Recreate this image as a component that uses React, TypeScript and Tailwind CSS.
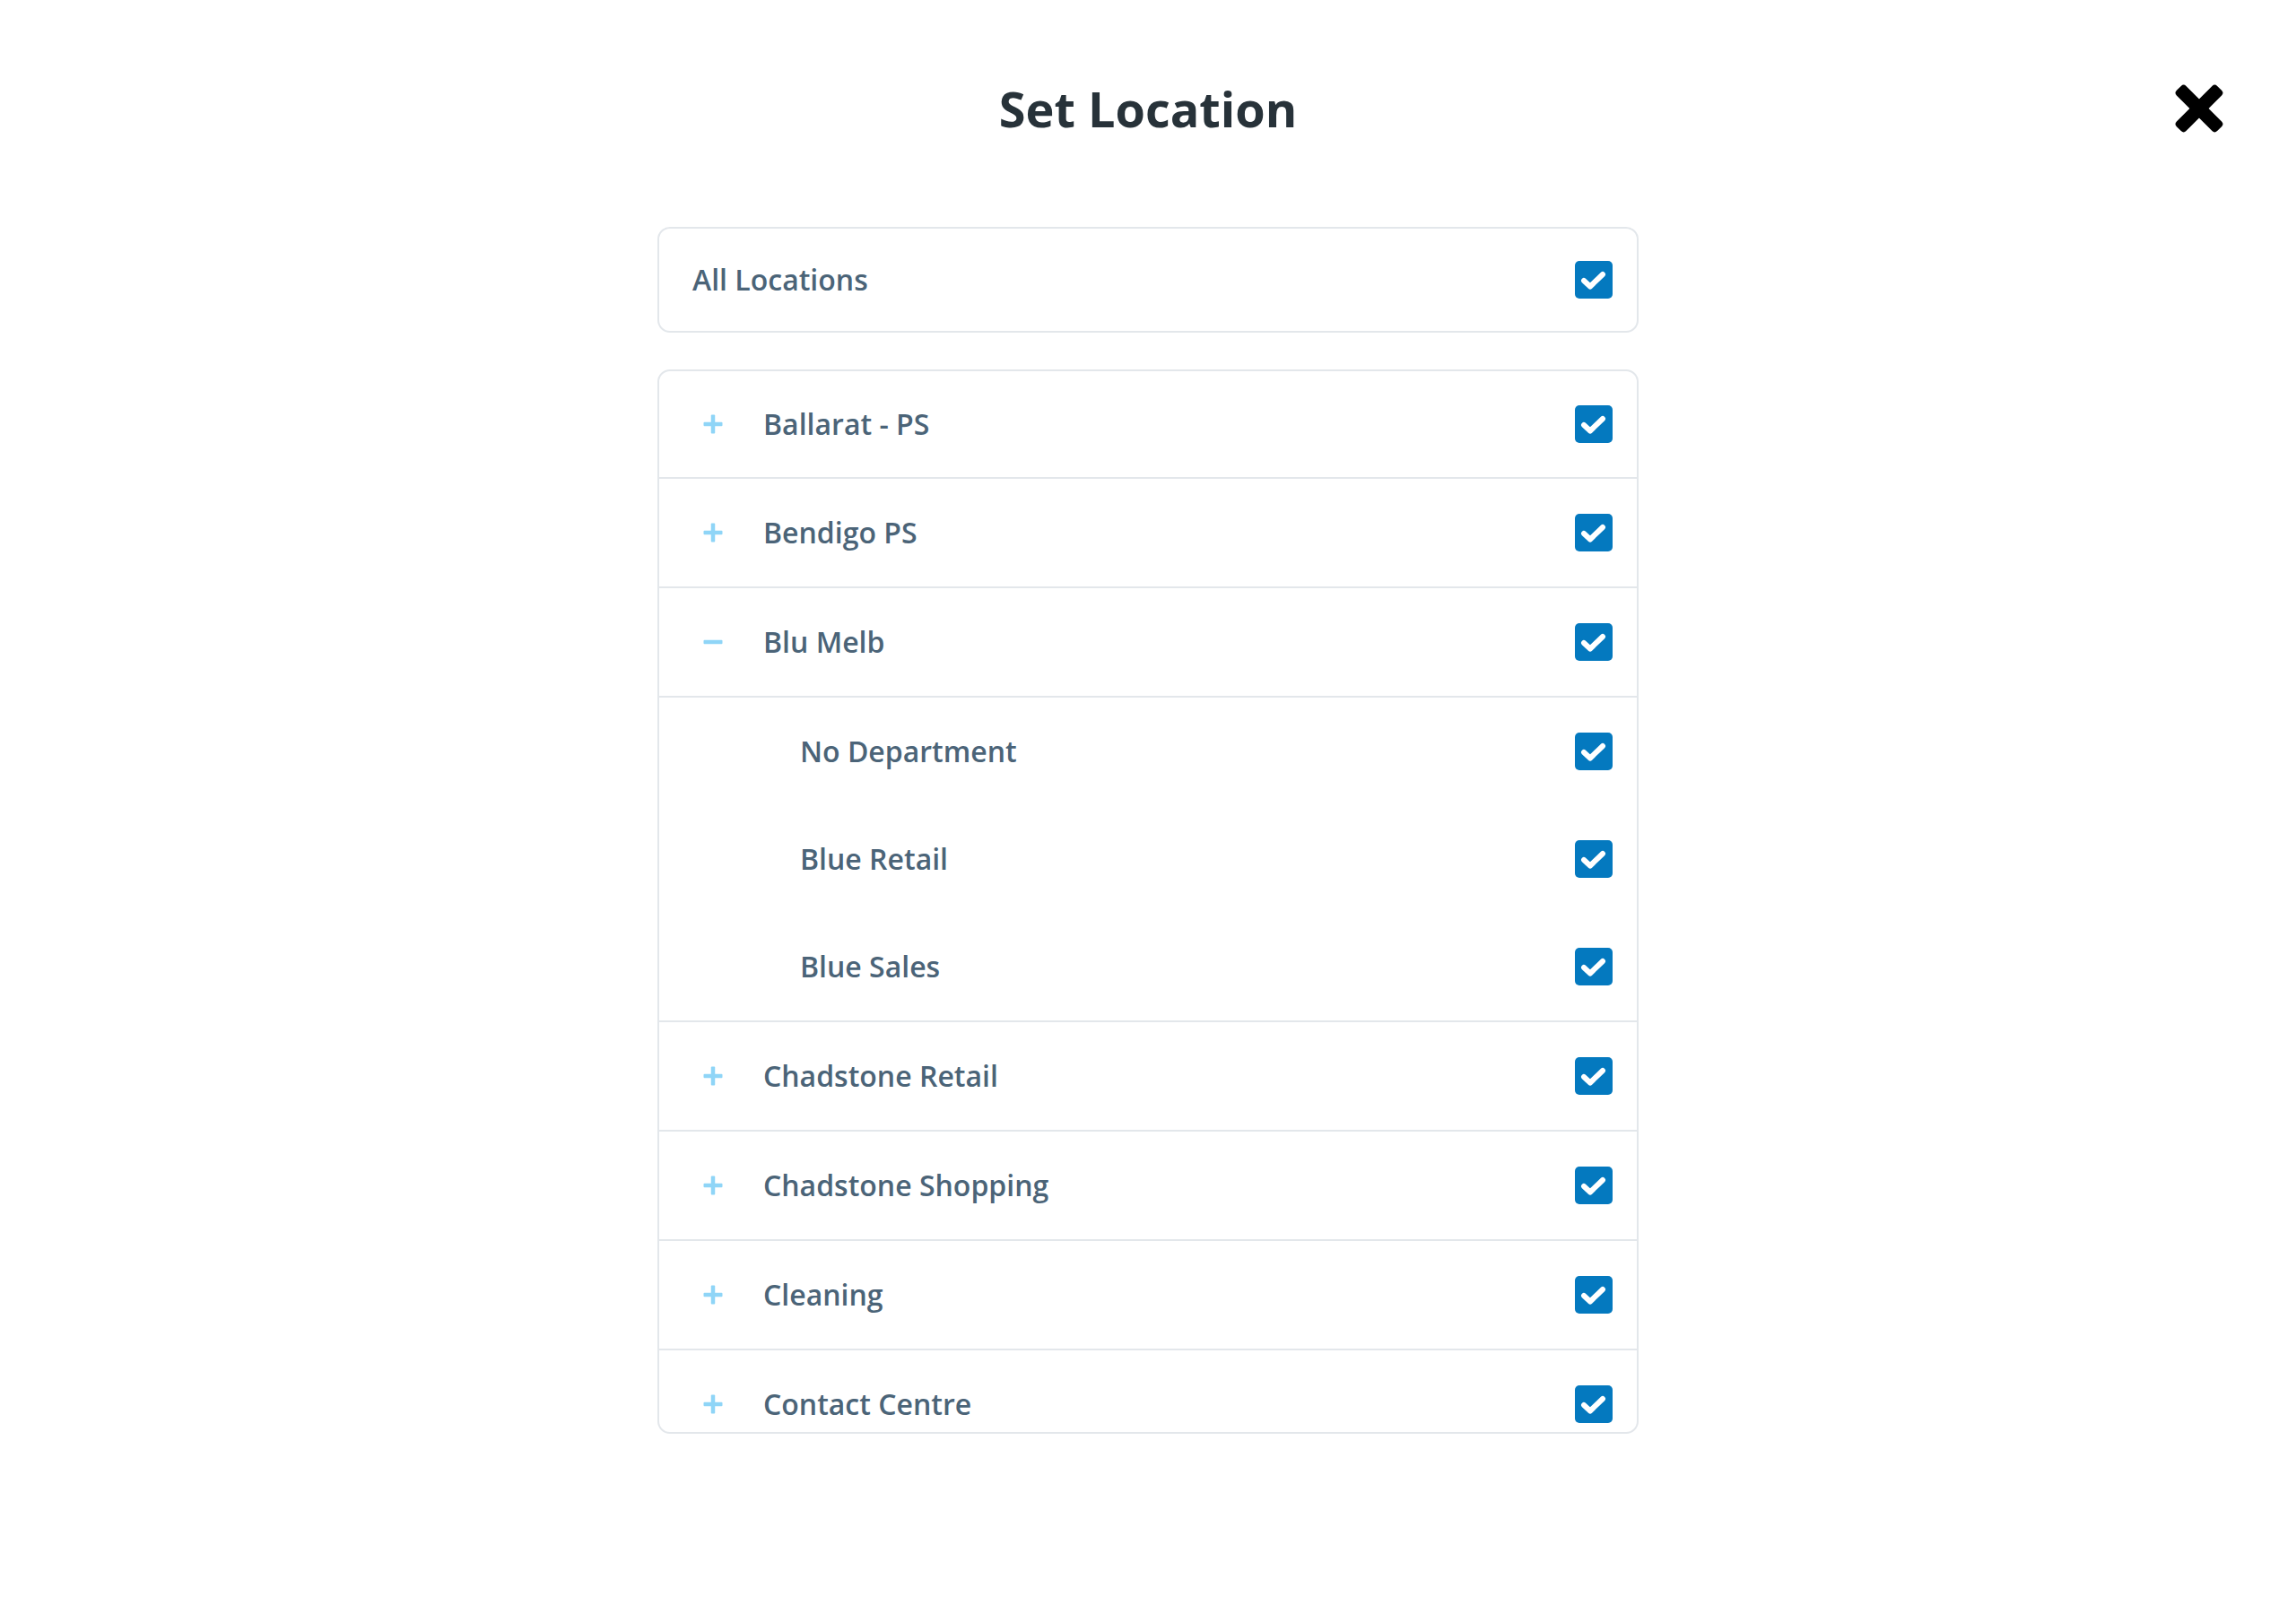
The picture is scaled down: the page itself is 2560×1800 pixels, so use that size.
import React from "react";

type Row = { name: string; open?: boolean; children?: string[] };

const rows: Row[] = [
  { name: "Ballarat - PS" },
  { name: "Bendigo PS" },
  { name: "Blu Melb", open: true, children: ["No Department", "Blue Retail", "Blue Sales"] },
  { name: "Chadstone Retail" },
  { name: "Chadstone Shopping" },
  { name: "Cleaning" },
  { name: "Contact Centre" },
];

function Check() {
  return (
    <div className="w-[42px] h-[42px] rounded-[5px] bg-[#0479bf] flex items-center justify-center shrink-0">
      <svg width="42" height="42" viewBox="0 0 42 42">
        <path
          d="M10 22 L17 28.5 L31 15"
          fill="none"
          stroke="#fff"
          strokeWidth="6"
          strokeLinecap="round"
          strokeLinejoin="round"
        />
      </svg>
    </div>
  );
}

function Toggle({ open }: { open?: boolean }) {
  return (
    <svg width="22" height="22" viewBox="0 0 22 22" className="shrink-0">
      <rect x="0.5" y="8.75" width="21" height="4.5" rx="1" fill="#8fd5f7" />
      {!open && <rect x="8.75" y="0.5" width="4.5" height="21" rx="1" fill="#8fd5f7" />}
    </svg>
  );
}

export default function App() {
  return (
    <div
      className="w-full min-h-screen bg-white text-[#4b6478]"
      style={{ fontFamily: '"Open Sans", "Noto Sans", sans-serif' }}
    >
      <div className="relative h-[242px] flex items-center justify-center">
        <h1 className="text-[54px] font-bold text-[#273239] leading-none">Set Location</h1>
        <button className="absolute right-[80px] top-[93px] w-[56px] h-[56px]">
          <svg width="56" height="56" viewBox="0 0 56 56">
            <rect x="-4" y="20.5" width="64" height="15" rx="4" fill="#000" transform="rotate(45 28 28)" />
            <rect x="-4" y="20.5" width="64" height="15" rx="4" fill="#000" transform="rotate(-45 28 28)" />
          </svg>
        </button>
      </div>

      <div className="w-[1094px] mx-auto mt-[11px]">
        <div className="h-[118px] border-2 border-[#e3e7eb] rounded-[14px] flex items-center justify-between pl-[37px] pr-[27px]">
          <span className="text-[32px] font-semibold">All Locations</span>
          <Check />
        </div>

        <div className="mt-[41px] h-[1187px] border-2 border-[#e3e7eb] rounded-[14px] overflow-hidden">
          {rows.map((r, i) => (
            <div key={r.name} className="border-b-2 border-[#e3e7eb]">
              <div
                className={
                  i === 0
                    ? "h-[118px] flex items-center pl-[49px] pr-[27px]"
                    : "h-[120px] flex items-center pl-[49px] pr-[27px]"
                }
              >
                <Toggle open={r.open} />
                <span className="ml-[45px] text-[32px] font-semibold flex-1">{r.name}</span>
                <Check />
              </div>
              {r.children && (
                <div className="border-t-2 border-[#e3e7eb]">
                  {r.children.map((c) => (
                    <div key={c} className="h-[120px] flex items-center pl-[157px] pr-[27px]">
                      <span className="text-[32px] font-semibold flex-1">{c}</span>
                      <Check />
                    </div>
                  ))}
                </div>
              )}
            </div>
          ))}
        </div>
      </div>
    </div>
  );
}
